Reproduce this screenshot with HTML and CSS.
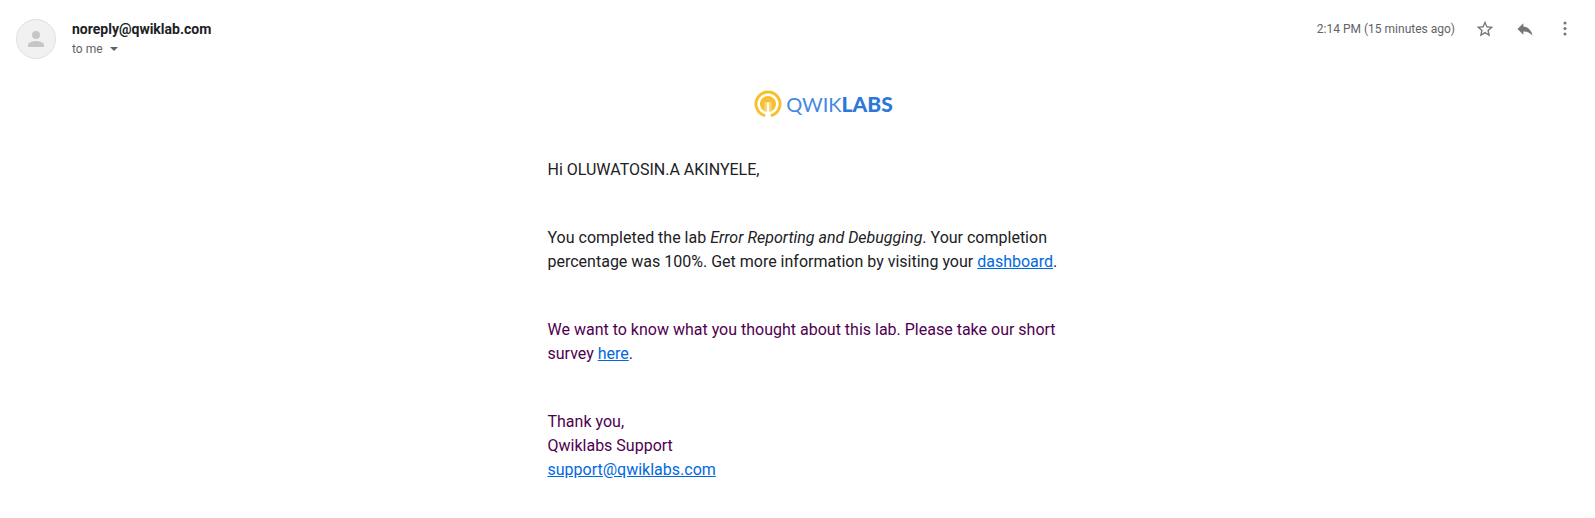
FILE: index.html
```html
<!DOCTYPE html>
<html lang="en">
<head>
<meta charset="utf-8">
<title>Qwiklabs message</title>
<link rel="stylesheet" href="styles.css">
</head>
<body>
<article class="message">
  <header class="message-header">
    <div class="avatar">
      <svg width="24" height="24" viewBox="0 0 24 24" fill="currentColor" aria-hidden="true"><circle cx="12" cy="8" r="4"/><path d="M12 14c-2.700 0-8 1.300-8 4v2h16v-2c0-2.700-5.300-4-8-4z"/></svg>
    </div>
    <div class="sender">
      <h1 class="sender-name">noreply@qwiklab.com</h1>
      <button class="recipient" type="button">to me
        <svg width="8" height="4" viewBox="0 0 8 4" fill="currentColor" aria-hidden="true"><path d="M0 0h8L4 4z"/></svg>
      </button>
    </div>
    <time class="sent">2:14 PM (15 minutes ago)</time>
    <div class="actions">
      <button class="icon-button" type="button" aria-label="Star">
        <svg width="20" height="20" viewBox="0 0 24 24" fill="currentColor"><path d="M22 9.240l-7.190-.62L12 2 9.190 8.630 2 9.240l5.460 4.730L5.820 21 12 17.270 18.180 21l-1.630-7.030L22 9.240zM12 15.400l-3.760 2.270 1-4.280-3.320-2.880 4.380-.38L12 6.100l1.710 4.040 4.380.38-3.320 2.880 1 4.280L12 15.400z"/></svg>
      </button>
      <button class="icon-button" type="button" aria-label="Reply">
        <svg width="20" height="20" viewBox="0 0 24 24" fill="currentColor"><path d="M10 9V5l-7 7 7 7v-4.100c5 0 8.500 1.600 11 5.100-1-5-4-10-11-11z"/></svg>
      </button>
      <button class="icon-button" type="button" aria-label="More">
        <svg width="20" height="20" viewBox="0 0 20 20" fill="currentColor"><circle cx="10" cy="4" r="1.500"/><circle cx="10" cy="9.500" r="1.500"/><circle cx="10" cy="15" r="1.500"/></svg>
      </button>
    </div>
  </header>
  <div class="body">
    <div class="content">
      <div class="logo">
        <svg width="28" height="28" viewBox="0 0 28 28" fill="none" aria-hidden="true">
          <path d="M11.200 25.600A12 12 0 1 1 16.800 25.600" stroke="#f6c12f" stroke-width="3"/>
          <path d="M12.600 21.800A8 8 0 1 1 15.400 21.800V14q0-1.400-1.400-1.400t-1.400 1.400z" fill="#f6c12f"/>
          <path d="M11.100 22.500V12.500h5.800v10" stroke="#fbe29a" stroke-width="1"/>
        </svg>
        <span class="logo-text">QWIK<b>LABS</b></span>
      </div>
      <p>Hi OLUWATOSIN.A AKINYELE,</p>
      <p>You completed the lab <em>Error Reporting and Debugging</em>. Your completion percentage was 100%. Get more information by visiting your <a href="#dashboard">dashboard</a>.</p>
      <p class="closing">We want to know what you thought about this lab. Please take our short survey <a href="#survey">here</a>.</p>
      <p class="closing">Thank you,<br>Qwiklabs Support<br><a href="mailto:support@qwiklabs.com">support@qwiklabs.com</a></p>
    </div>
  </div>
</article>
</body>
</html>
```
FILE: styles.css
```css
body {
  margin: 0;
  background: #fff;
  color: #202124;
  font-family: Roboto, "Liberation Sans", sans-serif;
}

button {
  padding: 0;
  border: 0;
  background: none;
  font: inherit;
  color: inherit;
}

svg {
  display: block;
}

.message {
  padding: 19px 20px 32px 16px;
}

.message-header {
  display: flex;
  align-items: flex-start;
}

.avatar {
  display: grid;
  place-items: center;
  box-sizing: border-box;
  width: 40px;
  height: 40px;
  margin-right: 16px;
  border: 1px solid #e0e0e0;
  border-radius: 50%;
  background: #f1f1f1;
  color: #c6c6c6;
}

.sender {
  flex: 1;
}

.sender-name {
  margin: 0;
  font-size: 14px;
  line-height: 20px;
  font-weight: 700;
}

.recipient {
  display: flex;
  align-items: center;
  gap: 7px;
  font-size: 12px;
  line-height: 20px;
  color: #5f6368;
}

.sent {
  font-size: 12px;
  line-height: 20px;
  color: #5f6368;
}

.actions {
  display: flex;
  gap: 20px;
  margin-left: 20px;
  color: #757575;
}

.icon-button {
  width: 20px;
  height: 20px;
}

.body {
  margin-top: 31px;
  padding-left: 56px;
}

.content {
  box-sizing: border-box;
  max-width: 600px;
  margin: 0 auto;
  padding: 0 24px;
  font-size: 16px;
  line-height: 24px;
}

.logo {
  display: flex;
  align-items: center;
  justify-content: center;
  gap: 4px;
  margin-bottom: 40px;
}

.logo-text {
  font-family: Lato, sans-serif;
  font-size: 20px;
  line-height: 28px;
  color: #4489df;
}

.logo-text b {
  font-size: 21px;
  font-weight: 900;
  color: #2b78d8;
}

.content p {
  margin: 0 0 44px;
}

.content p:last-child {
  margin-bottom: 0;
}

.closing {
  color: #500050;
}

.content a {
  color: #0069e0;
}
```
